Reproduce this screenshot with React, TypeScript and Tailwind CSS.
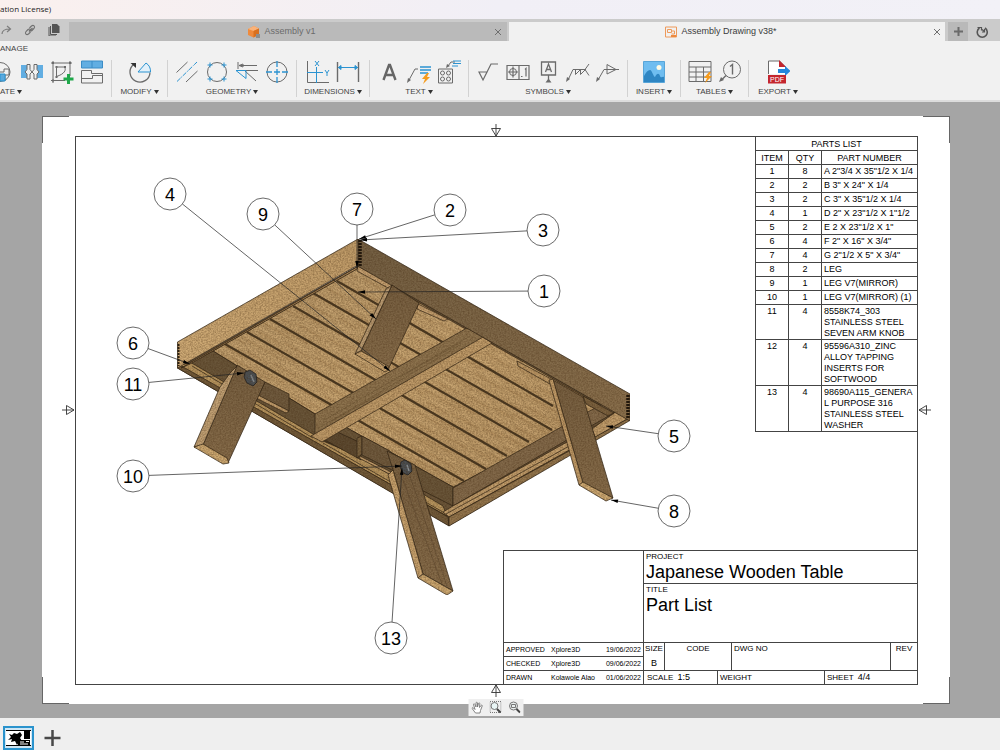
import type { ReactNode } from "react";

const G = "#6b6b6b";
const B = "#2b93d1";

const Icon = ({ children, w = 24 }: { children: ReactNode; w?: number }) => (
  <svg width={w} height="24" viewBox={`${24 - w} 0 ${w} 24`} fill="none" stroke={G} strokeWidth="1" className="block shrink-0">
    {children}
  </svg>
);

const Bolt = ({ x, y }: { x: number; y: number }) => (
  <path d={`M${x + 4} ${y}l-5 6h3l-2 5 7-7h-3l2-4z`} fill="#f59b1c" stroke="none" />
);

const createIcons = [
  <Icon key="base" w={14}>
    <path d="M10 2.500a10 9.500 0 0 1 0 19M10 1l-3 1.500 3 2" />
    <path d="M10 12h4v-3h5v6h-4v6" />
    <path d="M10 14h5v7h-5z" fill="#5ba9dd" stroke={B} />
  </Icon>,
  <Icon key="section">
    <path d="M1 5h6v13H1zM17 5h6v13h-6z" fill="#62aee2" stroke="none" />
    <path d="M7 4.500h3v5l2 2.500-2 2v5H7v-5l-2-2 2-2.500zM17 4.500h-3v5l-2 2.500 2 2v5h3v-5l2-2-2-2.500z" fill="#f1f1f1" />
  </Icon>,
  <Icon key="sketch">
    <path d="M3 1v22M20 1v15M1 3h21M1 20.500h14M6.500 7v9.500M6.500 7h8c2 3 0 7-8 9.500" />
    <path d="M2 2h2v2H2zM19 2h2v2h-2zM2 19.500h2v2H2zM5.500 6h2v2h-2zM14 6h2v2h-2zM5.500 16h2v2h-2z" fill={G} stroke="none" />
    <path d="M18.500 14v10M13.500 19h10" stroke="#1fa84a" strokeWidth="3" />
  </Icon>,
  <Icon key="break">
    <path d="M1.500 1h21v7h-21z" fill="#62aee2" stroke="#3b8cc6" />
    <path d="M12 1v7" stroke="#3b8cc6" />
    <path d="M1.500 23V10.500h10v3h11V23zM1.500 18.500h11v-3h10" />
  </Icon>,
];

const groups: { label: string; width: string; icons: ReactNode[] }[] = [
  {
    label: "MODIFY",
    width: "w-14",
    icons: [
      <Icon key="rotate">
        <path d="M5.500 4.500a10 10 0 1 0 16.500 8" strokeWidth="1.300" />
        <path d="M10 12h12.500a10 10 0 0 0-4.500-9z" stroke={B} fill="#e3f1fa" />
        <path d="M2.500 3H8v5z" fill="#333" stroke="none" />
      </Icon>,
    ],
  },
  {
    label: "GEOMETRY",
    width: "w-[129px]",
    icons: [
      <Icon key="centerline">
        <path d="M1.500 12.500l11-10.500M11 22L22.500 11" />
        <path d="M2 21.500L22 2" stroke={B} strokeDasharray="5 1 1 1" />
      </Icon>,
      <Icon key="pattern">
        <circle cx="12" cy="12" r="9.500" />
        <path d="M2.500 5h5M5 2.500v5M16.500 5h5M19 2.500v5M2.500 19h5M5 16.500v5M16.500 19h5M19 16.500v5" stroke={B} />
      </Icon>,
      <Icon key="edge">
        <path d="M3 2v7M4 5.500h18M4 5.500l4-1.500v3zM3 10.500h20M10 11l11 10" />
        <path d="M1 10.500h10v8M1 10.500l10 8" stroke={B} />
      </Icon>,
      <Icon key="centermark">
        <circle cx="12" cy="12" r="10" />
        <path d="M12 1v6M12 9v6M12 17v6M1 12h6M9 12h6M17 12h6" stroke={B} strokeWidth="1.300" />
      </Icon>,
    ],
  },
  {
    label: "DIMENSIONS",
    width: "w-[73px]",
    icons: [
      <Icon key="ordinate">
        <path d="M1.500 1v21.500H23" />
        <path d="M1 12.500h16M10.500 7v16M9 1l4 5M13 1L9 6M19 10l2 3v3M23 10l-2 3" stroke={B} />
      </Icon>,
      <Icon key="linear">
        <path d="M1.500 2v20M22.500 2v20" strokeWidth="1.400" />
        <path d="M2 7.500h20M5 5.500L2.500 7.500 5 9.500zM19 5.500l2.500 2-2.500 2z" stroke={B} fill={B} />
      </Icon>,
    ],
  },
  {
    label: "TEXT",
    width: "w-[99px]",
    icons: [
      <Icon key="text">
        <path d="M6.500 20L12 5h1l5.500 15M8.500 15h8" strokeWidth="2.400" stroke="#666" />
      </Icon>,
      <Icon key="leader">
        <path d="M2 20L8 9h3" />
        <path d="M0 23l1-5 3 2z" fill={G} stroke="none" />
        <path d="M13 7h11M13 10h11M13 13h8" stroke={B} strokeWidth="1.600" />
        <Bolt x={16} y={13} />
      </Icon>,
      <Icon key="holenote">
        <path d="M1.500 9h14v14h-14zM11 6l3-4h4" />
        <circle cx="5.500" cy="13" r="2" />
        <circle cx="11.500" cy="13" r="2" />
        <circle cx="5.500" cy="19" r="2" />
        <circle cx="11.500" cy="19" r="2" />
        <path d="M9 8l1-4 3 2z" fill={G} stroke="none" />
        <path d="M16 1h8M16 3.500h8M15 6h6" stroke={B} />
      </Icon>,
    ],
  },
  {
    label: "SYMBOLS",
    width: "w-[159px]",
    icons: [
      <Icon key="surface">
        <path d="M3 12h8l-4 8zM7 20l8-16h7" strokeWidth="1.200" />
      </Icon>,
      <Icon key="fcf">
        <path d="M1 5.500h22v14H1zM13 5.500v14" strokeWidth="1.200" />
        <circle cx="7" cy="12" r="3.500" />
        <path d="M7 6.500v11M2 12h10M15 16.500h1.500M19 9.500l1-1v8" strokeWidth="1.200" />
      </Icon>,
      <Icon key="datum">
        <path d="M5.500 2h14v13h-14zM12.500 15v5M9.500 12l3-8 3 8M10.500 9.500h4" strokeWidth="1.300" />
        <path d="M9.500 22.500l3-4 3 4z" fill={G} stroke="none" />
      </Icon>,
      <Icon key="weld">
        <path d="M2 20L7 9.500h13M9.500 9.500v5l5-5v5l5-5M19 9.500L23 4M19 9.500l4 6" />
        <path d="M0 22l1-5 3 2z" fill={G} stroke="none" />
      </Icon>,
      <Icon key="taper">
        <path d="M2 20L8 9.500h15M11 4.500v9.500l9-4.500z" />
        <path d="M0 22l1-5 3 2z" fill={G} stroke="none" />
      </Icon>,
    ],
  },
  {
    label: "INSERT",
    width: "w-[53px]",
    icons: [
      <Icon key="image">
        <path d="M1.500 1.500h21v21h-21z" fill="#6fbdf0" stroke="#58a5d8" />
        <path d="M2 16c2-4 4-6 6-6s3 6 5 7c2-4 4-4 5-1s3 0 4 1v5H2z" fill="#2f86c3" stroke="none" />
        <circle cx="17" cy="7.500" r="2.500" fill="#fffbe5" stroke="none" />
      </Icon>,
    ],
  },
  {
    label: "TABLES",
    width: "w-[68px]",
    icons: [
      <Icon key="table">
        <path d="M1 1.500h22v20H1zM1 7h22M1 12h22M1 17h22M8 7v14M15.500 7v14" />
        <Bolt x={17} y={12} />
      </Icon>,
      <Icon key="balloon">
        <circle cx="14" cy="9.500" r="8.500" />
        <path d="M12 6.500l2.500-2v10M8 15.500l-5 5" strokeWidth="1.400" />
        <path d="M1 22l2-5 3 3z" fill={G} stroke="none" />
      </Icon>,
    ],
  },
  {
    label: "EXPORT",
    width: "w-[58px]",
    icons: [
      <Icon key="pdf">
        <path d="M2.500 14V1h11l6 6v7" fill="#fff" />
        <path d="M13 0l7 7h-7z" fill="#c4262e" stroke="none" />
        <path d="M12 9h7V6l5.500 5-5.500 5v-3h-7z" fill="#2387dc" stroke="none" />
        <path d="M2 15h18v8.500H2z" fill="#c4262e" stroke="none" />
        <text x="4" y="22" fill="#fff" stroke="none" fontSize="7" fontFamily="Liberation Sans, sans-serif">PDF</text>
      </Icon>,
    ],
  },
];

const parts = [
  ["1", "8", 'A 2"3/4 X 35"1/2 X 1/4'],
  ["2", "2", 'B 3" X 24" X 1/4'],
  ["3", "2", 'C 3" X 35"1/2 X 1/4'],
  ["4", "1", 'D 2" X 23"1/2 X 1"1/2'],
  ["5", "2", 'E 2 X 23"1/2 X 1"'],
  ["6", "4", 'F 2" X 16" X 3/4"'],
  ["7", "4", 'G 2"1/2 X 5" X 3/4"'],
  ["8", "2", "LEG"],
  ["9", "1", "LEG V7(MIRROR)"],
  ["10", "1", "LEG V7(MIRROR) (1)"],
  ["11", "4", "8558K74_303\nSTAINLESS STEEL\nSEVEN ARM KNOB"],
  ["12", "4", "95596A310_ZINC\nALLOY TAPPING\nINSERTS FOR\nSOFTWOOD"],
  ["13", "4", "98690A115_GENERA\nL PURPOSE 316\nSTAINLESS STEEL\nWASHER"],
];

// balloon: number, centre x, centre y, arrow tip x, arrow tip y
const balloons = [
  [4, 170, 194, 390, 371],
  [9, 263, 214, 376, 319],
  [7, 357, 209, 357, 268],
  [2, 450, 210, 359, 239],
  [3, 543, 230, 360, 240],
  [1, 544, 291, 358, 292],
  [6, 133, 343, 190, 364],
  [11, 133, 384, 244, 373],
  [10, 133, 476, 402, 466],
  [5, 674, 436, 606, 426],
  [8, 674, 511, 611, 500],
  [13, 391, 638, 402, 468],
];

const plankGaps = [
  [337, 281, 553, 406],
  [313, 293, 552, 430],
  [293, 306, 529, 442],
  [270, 319, 507, 456],
  [247, 332, 486, 469],
  [225, 344, 464, 481],
];

const Joint = ({ x, y, n }: { x: number; y: number; n: number }) => (
  <path d={`M${x} ${y}v${n}`} stroke="#1d150c" strokeWidth="3.500" strokeDasharray="2 1" />
);

const TableModel = () => (
  <g filter="url(#grain)" stroke="#2e2314" strokeWidth="0.700" strokeLinejoin="round">
    {/* underside */}
    <path d="M358 266L629 420 449 525.500 177.500 368z" fill="#6b563a" />
    <path d="M358 268L606 409 453 487 333 420 315 414 213 351z" fill="url(#plank)" />
    <path d="M358 268L606 409 453 487 333 420 315 414 213 351z" fill="url(#streaks)" stroke="none" />
    {plankGaps.map(([x1, y1, x2, y2]) => (
      <path key={x1} d={`M${x1} ${y1}L${x2} ${y2}`} stroke="#4a3922" strokeWidth="2.200" />
    ))}
    {/* long side rail, front */}
    <path d="M213 351L315 414 333 420 453 487v19L313 435 190 363z" fill="#695539" />
    <path d="M190 362L313 434l10 7 35 15 35 20 50 30 4 10L178 366z" fill="#b8965f" />
    <path d="M192 366L313 438M323 443l125 72" />
    <path d="M178 364L448 517l1 9-271.500-158z" fill="#715a3a" />
    <path d="M265 382L289 394v17l-31-15z" fill="#6f5a3e" />
    <path d="M258 395l31 16-3 2-30-15z" fill="#c09c6b" />
    <path d="M333 430l28 13v17l-36-20z" fill="#5c4930" />
    <path d="M357 438l5-2v18l-5 4z" fill="#79623f" />
    <path d="M362 436l28 15 4 20-32-16z" fill="#6f5a3e" />
    <path d="M360 456l33 17v3l-34-18z" fill="#c09c6b" />
    {/* end rail */}
    <path d="M453 488L611 399l6 12L453 506z" fill="#82694a" />
    <path d="M443 512l10-6L617 414l8 5-176 98z" fill="#c19d6b" />
    <path d="M449 517L629 418v3L449 526z" fill="#92754d" />
    <path d="M446 514L622 417" />
    {/* centre beam */}
    <path d="M315 414L467 328l18 9-170 99z" fill="#8d734e" />
    <path d="M324 420L470 336M317 429L460 345M330 422l50-28M400 377l60-34" stroke="#6b5435" strokeWidth="0.500" />
    <path d="M311 436L483 337l9 6L322 442z" fill="#bf9b69" />
    {/* blocks under the back rail */}
    <path d="M358 266l34 18-2 5-33-18z" fill="#c5a070" />
    <path d="M418 304l30 15-4 2-27-12z" fill="#c5a070" />
    <path d="M517 361l36 19-3 4-32-18z" fill="#bb9765" />
    <path d="M583 396l31 17-6 3-22-12z" fill="#7a613f" />
    <path d="M617 411l10 8-32 18-3-8z" fill="#c19d6b" />
    {/* side rails */}
    <path d="M358 239L630 394v27L357.500 266z" fill="url(#railDark)" />
    <path d="M177.500 342L358 239v26L177.500 368z" fill="url(#railLight)" />
    <path d="M181 368L357 267v2L190 364z" fill="#b5905f" />
    <Joint x={360} y={240} n={26} />
    <Joint x={628} y={395} n={24} />
    <path d="M178.500 344v22" stroke="#2b2012" strokeWidth="2" strokeDasharray="2 1" />
    {/* legs */}
    <path d="M237 365l28 17-37 81-25-18z" fill="url(#leg)" />
    <path d="M237 366l-7 7-10 14-26 60 9-2z" fill="#c0a074" />
    <path d="M194 447l9-3 24 14 2 5-6 1z" fill="#cda972" />
    <path d="M392 285l27 18-31 67-27-19z" fill="url(#leg)" />
    <path d="M386 289l6-4-31 66-6 3z" fill="#b99b72" />
    <path d="M355 354l6-3 27 15 1 4-4 2z" fill="#c7a26e" />
    <path d="M553 380l30 17 30 101-30-15z" fill="url(#leg)" />
    <path d="M549 380l4-1 30 104-4 2z" fill="#c09b68" />
    <path d="M579 485l4-3 30 16-7 3z" fill="#cfab74" />
    <path d="M387 451l28 14 38 126-30-17-30-104z" fill="url(#leg)" />
    <path d="M388 475l5-5 30 104-5 4z" fill="#c7a26e" />
    <path d="M418 578l5-4 30 17-6 4z" fill="#cda972" />
    <path d="M403 480l39 104M410 476l37 110" stroke="#5a4730" strokeWidth="0.500" />
    {/* knobs */}
    <g fill="#4b5054" stroke="#17191b">
      <path d="M245 372l5-2 6 4 1 8-4 4-6-3-3-6z" />
      <path d="M401 462l4-2 6 4 1 7-4 4-5-2-3-6z" />
    </g>
    <path d="M251 375l3 7M407 465l2 6" stroke="#899095" strokeWidth="1.500" />
  </g>
);

const Balloon = ({ b }: { b: number[] }) => {
  const [n, cx, cy, tx, ty] = b;
  const len = Math.hypot(tx - cx, ty - cy);
  const ux = (tx - cx) / len;
  const uy = (ty - cy) / len;
  const bx = tx - ux * 7;
  const by = ty - uy * 7;
  return (
    <g>
      <path d={`M${cx + ux * 16} ${cy + uy * 16}L${tx} ${ty}`} stroke="#222" strokeWidth="0.700" />
      <path d={`M${tx} ${ty}L${bx - uy * 1.8} ${by + ux * 1.8}L${bx + uy * 1.8} ${by - ux * 1.8}z`} fill="#000" />
      <circle cx={cx} cy={cy} r="16" fill="#fff" stroke="#444" strokeWidth="0.800" />
      <text x={cx} y={cy + 7} textAnchor="middle" fontSize="18" fill="#000">
        {n}
      </text>
    </g>
  );
};

const Drawing = () => (
  <svg viewBox="76 137 841 547" className="col-start-1 row-start-1 block h-auto w-full" fill="none">
    <defs>
      <filter id="grain" x="0" y="0" width="100%" height="100%" colorInterpolationFilters="sRGB">
        <feTurbulence type="fractalNoise" baseFrequency="0.600 0.700" numOctaves="2" seed="4" result="n" />
        <feColorMatrix in="n" type="matrix" values="0 0 0 0 0.250  0 0 0 0 0.150  0 0 0 0 0.050  0.700 0 0 0 -0.220" result="s" />
        <feComposite in="s" in2="SourceAlpha" operator="in" result="c" />
        <feMerge>
          <feMergeNode in="SourceGraphic" />
          <feMergeNode in="c" />
        </feMerge>
      </filter>
      <pattern id="streaks" width="90" height="23" patternUnits="userSpaceOnUse" patternTransform="rotate(30)">
        <path d="M4 3h30M50 6h28M20 10h44M2 14h22M58 17h30M30 20h24" stroke="#8a5f33" strokeOpacity="0.350" strokeWidth="1.200" />
        <path d="M40 3h34M4 7h38M66 12h22M28 16h24M4 20h20" stroke="#dcb683" strokeOpacity="0.400" strokeWidth="1.500" />
      </pattern>
      <linearGradient id="plank" x1="0" y1="0" x2="1" y2="1">
        <stop offset="0" stopColor="#b79768" />
        <stop offset="0.500" stopColor="#c4a16e" />
        <stop offset="1" stopColor="#b39161" />
      </linearGradient>
      <linearGradient id="railDark" x1="0" y1="0" x2="1" y2="1">
        <stop offset="0" stopColor="#735f43" />
        <stop offset="1" stopColor="#8a704d" />
      </linearGradient>
      <linearGradient id="railLight" x1="1" y1="0" x2="0" y2="1">
        <stop offset="0" stopColor="#c09c69" />
        <stop offset="1" stopColor="#d0ac77" />
      </linearGradient>
      <linearGradient id="leg" x1="0" y1="0" x2="0" y2="1">
        <stop offset="0" stopColor="#765f41" />
        <stop offset="1" stopColor="#866c4a" />
      </linearGradient>
    </defs>
    <TableModel />
    {balloons.map((b) => (
      <Balloon key={b[0]} b={b} />
    ))}
  </svg>
);

const PartsList = () => (
  <table className="border-separate border-spacing-0 bg-white text-center text-[9px] leading-[11px]">
    <thead>
      <tr>
        <th colSpan={3} className="h-[14px] border-b border-l border-[#444] p-0 pt-px font-normal">PARTS LIST</th>
      </tr>
      <tr>
        <th className="h-[14px] w-[33px] border-b border-l border-[#444] p-0 pt-px font-normal">ITEM</th>
        <th className="h-[14px] w-[33px] border-b border-l border-[#444] p-0 pt-px font-normal">QTY</th>
        <th className="h-[14px] w-24 border-b border-l border-[#444] p-0 pt-px font-normal">PART NUMBER</th>
      </tr>
    </thead>
    <tbody>
      {parts.map(([item, qty, name]) => (
        <tr key={item} className="align-top">
          <td className="h-[14px] border-b border-l border-[#444] p-0 pt-px">{item}</td>
          <td className="border-b border-l border-[#444] p-0 pt-px">{qty}</td>
          <td className="border-b border-l border-[#444] p-0 pt-px pl-0.5 text-left whitespace-pre">{name}</td>
        </tr>
      ))}
    </tbody>
  </table>
);

const signatures = [
  ["APPROVED", "Xplore3D", "19/06/2022"],
  ["CHECKED", "Xplore3D", "09/06/2022"],
  ["DRAWN", "Kolawole Alao", "01/06/2022"],
];

const TitleBlock = () => (
  <div className="flex h-[134px] w-[414px] border-t border-[#444] bg-white text-[8px] leading-[11px]">
    <div className="flex w-[140px] flex-col border-l border-[#444]">
      <div className="flex-1" />
      {signatures.map(([role, name, date]) => (
        <div key={role} className="flex h-[14px] items-center border-t border-[#444] pr-0.5 pl-0.5 text-[7px]">
          <span className="w-[45px]">{role}</span>
          <span className="flex-1 whitespace-nowrap">{name}</span>
          <span>{date}</span>
        </div>
      ))}
    </div>
    <div className="flex flex-1 flex-col border-l border-[#444]">
      <div className="h-8 pl-0.5">
        <p>PROJECT</p>
        <p className="text-lg leading-5">Japanese Wooden Table</p>
      </div>
      <div className="flex-1 border-t border-[#444] pl-0.5">
        <p>TITLE</p>
        <p className="text-lg leading-5">Part List</p>
      </div>
      <div className="flex h-7 border-t border-[#444]">
        <div className="w-[20px] text-center">
          <p>SIZE</p>
          <p className="mt-1 text-[9px]">B</p>
        </div>
        <p className="w-[67px] border-l border-[#444] text-center">CODE</p>
        <p className="flex-1 border-l border-[#444] pl-0.5">DWG NO</p>
        <p className="w-[27px] border-l border-[#444] text-center">REV</p>
      </div>
      <div className="flex h-[14px] items-stretch border-t border-[#444] leading-[13px]">
        <p className="w-[73px] pl-[3px]">SCALE <span className="ml-0.5 text-[9px]">1:5</span></p>
        <p className="w-[107px] border-l border-[#444] pl-0.5">WEIGHT</p>
        <p className="flex-1 border-l border-[#444] pl-0.5">SHEET <span className="ml-0.5 text-[9px]">4/4</span></p>
      </div>
    </div>
  </div>
);

const CenterMark = ({ className }: { className: string }) => (
  <svg width="11" height="13" viewBox="0 0 11 13" fill="none" stroke="#333" strokeWidth="0.900" className={`absolute ${className}`}>
    <path d="M5.500 0v12M1 4.500h9L5.500 12z" />
  </svg>
);

const CubeIcon = () => (
  <svg width="12" height="12" viewBox="0 0 12 12">
    <path d="M0 3l6-3 5 2.500v6L5.500 11.500 0 9z" fill="#ef8a3c" />
    <path d="M0 3l5.500 2L11 2.500 6 0z" fill="#f9b27a" />
    <path d="M5.500 5v6.500L11 8.500v-6z" fill="#d9701f" />
    <path d="M8 8h4v4H8z" fill="#8d8d8d" />
  </svg>
);

const SheetIcon = () => (
  <svg width="12" height="12" viewBox="0 0 12 12" fill="none" stroke="#ee9a5b">
    <path d="M.5 1h11v10H.5zM2.500 3.500h4v3h-4zM6.500 5h3v3h-3" />
    <path d="M6 9h5v2H6z" fill="#ee8a3f" stroke="none" />
  </svg>
);

const CloseButton = ({ name }: { name: string }) => (
  <button aria-label={`Close ${name}`} className="flex h-3 w-3 items-center justify-center">
    <svg width="8" height="8" viewBox="0 0 8 8" stroke="#6f6f6f" strokeWidth="1">
      <path d="M1 1l6 6M7 1L1 7" />
    </svg>
  </button>
);

const TabStrip = () => (
  <div className="flex h-[22px] items-end bg-[#cbcbcb] text-[9px]">
    <div className="flex h-full w-[69px] items-center gap-3 text-[#6e6e6e]">
      <button aria-label="Redo">
        <svg width="12" height="12" viewBox="0 0 12 12" fill="none" stroke="#7d7d7d" strokeWidth="1.200">
          <path d="M2 10c0-4 3-5 8-5M7 2l3.500 3L7 8" />
        </svg>
      </button>
      <button aria-label="Link">
        <svg width="12" height="12" viewBox="0 0 12 12" fill="none" stroke="#707070" strokeWidth="1.100">
          <path d="M5 7.500L8.500 4M5.500 4l2-2c2-1.500 4 .5 2.500 2.500L8 6.500C7 7.500 5.500 7 5 6M6.500 8l-2 2C2.500 11.500.5 9.500 2 7.500l2-2C5 4.500 6.500 5 7 6" />
        </svg>
      </button>
      <button aria-label="Documents">
        <svg width="12" height="12" viewBox="0 0 12 12">
          <path d="M4 0h5l2.500 2.500V9H4z" fill="#555" />
          <path d="M2.500 2v8.500H9M1 3v9h7" fill="none" stroke="#555" />
        </svg>
      </button>
    </div>
    <div className="mr-0.5 flex h-[19px] flex-1 items-center bg-[#bababa] px-[3px] text-[#6b6b6b]">
      <div className="flex flex-1 items-center justify-center gap-1">
        <CubeIcon />
        <span>Assembly v1</span>
      </div>
      <CloseButton name="Assembly v1" />
    </div>
    <div className="flex h-[19px] flex-1 items-center bg-[#f1f1f1] px-0.5 text-[#3c3c3c]">
      <div className="flex flex-1 items-center justify-center gap-1">
        <SheetIcon />
        <span>Assembly Drawing v38*</span>
      </div>
      <CloseButton name="Assembly Drawing v38*" />
    </div>
    <div className="flex h-[19px] w-[55px] items-center pl-[3px]">
      <button aria-label="New tab" className="flex h-full w-5 items-center justify-center bg-[#b9b9b9]">
        <svg width="9" height="9" viewBox="0 0 9 9" stroke="#6b6b6b" strokeWidth="2">
          <path d="M4.500 0v9M0 4.500h9" />
        </svg>
      </button>
      <button aria-label="Job status" className="ml-2">
        <svg width="12" height="12" viewBox="0 0 12 12" fill="none" stroke="#555" strokeWidth="1.600">
          <path d="M3.500 2a5 5 0 1 0 5.500 0" />
          <path d="M1.500 1.500h4v3M6 3.500l2.500 2M8.500 3v3H6" strokeWidth="1.200" />
        </svg>
      </button>
    </div>
  </div>
);

const Label = ({ text }: { text: string }) => (
  <span className="flex items-center gap-0.5">
    {text}
    <svg width="5" height="4" viewBox="0 0 5 4" fill="#333">
      <path d="M0 0h5L2.500 4z" />
    </svg>
  </span>
);

const Ribbon = () => (
  <div className="h-[61px] overflow-hidden border-b-2 border-[#dcdcdc] bg-[#f1f1f1] text-[8px] leading-[10px] text-[#444]">
    <p className="pt-[3px]">ANAGE</p>
    <div className="mt-1.5 flex">
      <button className="flex h-[37px] w-28 shrink-0 flex-col items-start justify-between border-r border-[#d2d2d2]">
        <span className="flex gap-1.5">{createIcons}</span>
        <Label text="ATE" />
      </button>
      {groups.map((g) => (
        <button key={g.label} className={`flex h-[37px] shrink-0 flex-col items-center justify-between border-[#d2d2d2] not-last:border-r ${g.width}`}>
          <span className="flex gap-1.5">{g.icons}</span>
          <Label text={g.label} />
        </button>
      ))}
    </div>
  </div>
);

const ViewTools = () => (
  <div className="absolute -bottom-3 left-1/2 flex h-[17px] w-[55px] -translate-x-1/2 items-center justify-around bg-[#efefef]">
    <button aria-label="Pan">
      <svg width="12" height="13" viewBox="0 0 12 13" fill="#fff" stroke="#777" strokeWidth="0.900">
        <path d="M4 12L1 8c-1-1 0-2 1-1l1.500 1.500L2 3.500c0-1 1-1 1.500 0L4.500 6 4.500 2c0-1 1.300-1 1.500 0v4l1-3.500c.3-1 1.500-.7 1.300.3L8 6.500 9.500 4.500c.5-.8 1.500-.3 1.200.5L9 9.500 8.500 12z" />
      </svg>
    </button>
    <button aria-label="Zoom window">
      <svg width="12" height="13" viewBox="0 0 12 13" fill="none" stroke="#777">
        <path d="M.5.5h11v11H.5z" strokeDasharray="1 1" />
        <circle cx="5" cy="5" r="3.500" fill="#e9f5f5" />
        <path d="M7.500 8l3.500 3.500" stroke="#444" strokeWidth="2" />
      </svg>
    </button>
    <button aria-label="Zoom">
      <svg width="12" height="13" viewBox="0 0 12 13" fill="none" stroke="#777">
        <circle cx="5" cy="5" r="4" fill="#e9eeee" />
        <path d="M3 3.500h4v3H3z" />
        <path d="M8 8l3.500 3.500" stroke="#444" strokeWidth="2" />
      </svg>
    </button>
  </div>
);

const App = () => {
  return (
    <div className="flex min-h-screen flex-col bg-[#a5a5a5] font-['Liberation_Sans',Arial,sans-serif]">
      <header className="h-[19px] bg-linear-to-r from-[#faf0ee] via-[#f1eff6] to-[#f2f1f7] font-['Open_Sans',sans-serif] text-[8px] leading-[17px] text-[#222]">
        ation License)
      </header>
      <TabStrip />
      <Ribbon />
      <main className="flex-1 py-3.5 pr-[50px] pl-[42px] text-black">
        <section className="relative bg-white pt-5 pr-8 pb-[19px] pl-[33px]">
          <span className="absolute top-0 left-0 h-[27px] w-[27px] border-t border-l border-[#666]" />
          <span className="absolute top-0 right-0 h-[27px] w-[27px] border-t border-r border-[#666]" />
          <span className="absolute bottom-0 left-0 h-[27px] w-[27px] border-b border-l border-[#666]" />
          <span className="absolute right-0 bottom-0 h-[27px] w-[27px] border-r border-b border-[#666]" />
          <CenterMark className="top-2 left-1/2 -translate-x-1/2" />
          <CenterMark className="bottom-[7px] left-1/2 -translate-x-1/2 rotate-180" />
          <CenterMark className="top-1/2 left-[21px] -translate-y-1/2 -rotate-90" />
          <CenterMark className="top-1/2 right-[20px] -translate-y-1/2 rotate-90" />
          <div className="grid border border-[#444]">
            <Drawing />
            <div className="col-start-1 row-start-1 flex flex-col items-end justify-between">
              <PartsList />
              <TitleBlock />
            </div>
          </div>
          <ViewTools />
        </section>
      </main>
      <footer className="flex h-8 items-end gap-[10px] bg-[#efefef] pl-[3px]">
        <button aria-label="Sheet 1" className="border-2 border-[#2a93cd] bg-[#cfe6f4]">
          <svg width="27" height="20" viewBox="0 0 27 20">
            <path d="M1 2h25v16H1z" fill="#fff" />
            <path d="M1 2h25v1H1zM1 17h25v1H1z" fill="#000" />
            <path d="M4 6l3 1 2-2 3 1 3-2 2 3-2 3 2 3-3 1-2 3-2-4-4 1 1-3-4 1 3-3zM19 3h6v8h-6zM13 12h12v6H13z" fill="#000" />
            <path d="M15 14h4M21 13.500h3M15 16h8" stroke="#fff" />
          </svg>
        </button>
        <button aria-label="Add sheet" className="mb-1">
          <svg width="17" height="16" viewBox="0 0 17 16" stroke="#484848" strokeWidth="2.500">
            <path d="M8.500 0v16M.5 8h16" />
          </svg>
        </button>
      </footer>
    </div>
  );
};

export default App;
